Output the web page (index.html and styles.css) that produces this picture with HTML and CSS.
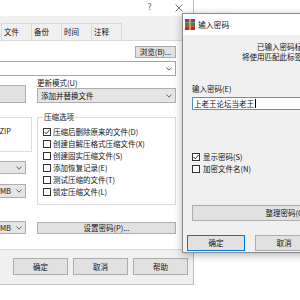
FILE: index.html
```html
<!DOCTYPE html>
<html>
<head lang="zh-CN">
    <meta charset="UTF-8">
    <title>输入密码</title>
    <link rel="stylesheet" href="styles.css">
</head>
<body>
    <!-- 后面的窗口：压缩文件名和参数 -->
    <div class="win" id="archive">
        <div class="caption">
            <span class="cap-btn cap-help">?</span>
            <span class="cap-btn">
                <svg width="8" height="8" viewBox="0 0 8 8"><path d="M0.5 0.5L7.5 7.5M7.5 0.5L0.5 7.5" stroke="#555" stroke-width="0.8" fill="none"/></svg>
            </span>
        </div>
        <div class="win-body">
            <ul class="tabs">
                <li>文件</li>
                <li>备份</li>
                <li>时间</li>
                <li>注释</li>
            </ul>
            <div class="page">
                <div class="row-browse">
                    <span class="btn btn-browse">浏览(B)...</span>
                </div>
                <div class="combo combo-edit">
                    <span></span>
                    <svg class="chev" width="6" height="4" viewBox="0 0 6 4"><polyline points="0.5,0.5 3,3.2 5.5,0.5" stroke="#555" stroke-width="0.9" fill="none"/></svg>
                </div>
                <div class="cols">
                    <div class="col-left">
                        <span class="btn btn-cfg"></span>
                        <div class="group group-fmt">
                            <div class="radios">
                                <span class="radio"><i></i>ZIP</span>
                            </div>
                        </div>
                        <div class="combo combo-method">
                            <span></span>
                            <svg class="chev" width="6" height="4" viewBox="0 0 6 4"><polyline points="0.5,0.5 3,3.2 5.5,0.5" stroke="#555" stroke-width="0.9" fill="none"/></svg>
                        </div>
                        <div class="combo combo-unit combo-dict">
                            <span>MB</span>
                            <svg class="chev" width="6" height="4" viewBox="0 0 6 4"><polyline points="0.5,0.5 3,3.2 5.5,0.5" stroke="#555" stroke-width="0.9" fill="none"/></svg>
                        </div>
                        <div class="combo combo-unit combo-vol">
                            <span>MB</span>
                            <svg class="chev" width="6" height="4" viewBox="0 0 6 4"><polyline points="0.5,0.5 3,3.2 5.5,0.5" stroke="#555" stroke-width="0.9" fill="none"/></svg>
                        </div>
                    </div>
                    <div class="col-right">
                        <div class="label">更新模式(U)</div>
                        <div class="combo combo-mode">
                            <span>添加并替换文件</span>
                            <svg class="chev" width="6" height="4" viewBox="0 0 6 4"><polyline points="0.5,0.5 3,3.2 5.5,0.5" stroke="#555" stroke-width="0.9" fill="none"/></svg>
                        </div>
                        <fieldset class="group group-opt">
                            <legend>压缩选项</legend>
                            <div class="check"><span class="box"><svg width="6" height="6" viewBox="0 0 6 6"><polyline points="0.6,3 2.3,4.8 5.4,1" stroke="#222" stroke-width="0.9" fill="none"/></svg></span>压缩后删除原来的文件(D)</div>
                            <div class="check"><span class="box"></span>创建自解压格式压缩文件(X)</div>
                            <div class="check"><span class="box"></span>创建固实压缩文件(S)</div>
                            <div class="check"><span class="box"></span>添加恢复记录(E)</div>
                            <div class="check"><span class="box"></span>测试压缩的文件(T)</div>
                            <div class="check"><span class="box"></span>锁定压缩文件(L)</div>
                        </fieldset>
                        <span class="btn btn-setpw">设置密码(P)...</span>
                    </div>
                </div>
            </div>
            <div class="win-foot">
                <span class="btn btn-foot">确定</span>
                <span class="btn btn-foot">取消</span>
                <span class="btn btn-foot">帮助</span>
            </div>
        </div>
    </div>

    <!-- 前面的窗口：输入密码 -->
    <div class="win" id="pwd">
        <div class="pwd-title">
            <svg width="10" height="11" viewBox="0 0 10 11">
                <rect x="0" y="0" width="10" height="3.6" fill="#7a3f95"/>
                <rect x="0" y="3.6" width="10" height="3.6" fill="#3f8a3c"/>
                <rect x="0" y="7.2" width="10" height="3.8" fill="#b5302a"/>
                <rect x="4" y="0" width="2" height="11" fill="#c9a35a"/>
            </svg>
            <span>输入密码</span>
        </div>
        <div class="pwd-body">
            <div class="note">
                <div class="note-1">已输入密码标签的列表</div>
                <div>将使用匹配此标签的密码</div>
            </div>
            <div class="pw-label">输入密码(E)</div>
            <div class="pw-input">上老王论坛当老王<span class="caret"></span></div>
            <div class="pw-checks">
                <div class="check"><span class="box"><svg width="6" height="6" viewBox="0 0 6 6"><polyline points="0.6,3 2.3,4.8 5.4,1" stroke="#222" stroke-width="0.9" fill="none"/></svg></span>显示密码(S)</div>
                <div class="check"><span class="box"></span>加密文件名(N)</div>
            </div>
            <span class="btn btn-organize">整理密码(O)...</span>
            <div class="pwd-foot">
                <span class="btn btn-dlg btn-default">确定</span>
                <span class="btn btn-dlg">取消</span>
            </div>
        </div>
    </div>
</body>
</html>
```

FILE: styles.css
```css
*{
    margin: 0;
    padding: 0;
    box-sizing: border-box;
}
ul{
    list-style: none;
}
body{
    width: 300px;
    height: 300px;
    overflow: hidden;
    position: relative;
    background: #ffffff;
    font-family: "Noto Sans CJK SC", "Noto Sans", sans-serif;
    font-size: 7.5px;
    line-height: 10px;
    color: #111;
}

/* 窗口 */
.win{
    position: absolute; /* 桌面上的窗口，互相叠在一起 */
    background: #f0f0f0;
    border: 1px solid #bcbcbc;
}
#archive{
    left: -20px;
    top: -1px;
    width: 214px;
    height: 286px;
}
.caption{
    height: 16px;
    background: #ffffff;
    display: flex;
    justify-content: flex-end;
}
.cap-btn{
    width: 29px;
    height: 16px;
    display: flex;
    align-items: center;
    justify-content: center;
}
.cap-help{
    font-family: "DejaVu Sans", sans-serif;
    font-size: 8px;
    color: #666;
}
.win-body{
    padding: 7px 5px 0;
}

/* 选项卡 */
.tabs{
    display: flex;
    padding-left: 15px;
    height: 17px;
}
.tabs li{
    width: 31px;
    height: 17px;
    margin-right: -1px;
    border: 1px solid #d9d9d9;
    border-bottom: none;
    background: #f0f0f0;
    padding-left: 2px;
    line-height: 15px;
}
.page{
    height: 210px;
    border: 1px solid #d9d9d9;
    background: #ffffff;
    padding: 5px 11px 0 6px;
}
.row-browse{
    display: flex;
    justify-content: flex-end;
}

/* 按钮 */
.btn{
    display: flex;
    align-items: center;
    justify-content: center;
    background: #e1e1e1;
    border: 1px solid #adadad;
    white-space: nowrap;
}
.btn-browse{
    width: 41px;
    height: 12px;
}

/* 下拉框 */
.combo{
    display: flex;
    align-items: center;
    justify-content: space-between;
    background: #e5e5e5;
    border: 1px solid #adadad;
    padding: 0 3px;
    white-space: nowrap;
}
.chev{
    flex: none;
}
.combo-edit{
    height: 15px;
    margin-top: 3px;
    background: #ffffff;
    border-color: #a5a5a5;
}

.cols{
    display: flex;
    gap: 5px;
    margin-top: 2px;
}
.col-left{
    width: 39px;
    flex: none;
}
.col-right{
    flex: 1;
}

.btn-cfg{
    margin: 7px 0 0 -60px;
    width: 93px;
    height: 18px;
}
.combo-method{
    margin: 9px 0 0 -60px;
    width: 93px;
    height: 13px;
}
.combo-unit{
    width: 30px;
    margin-left: 3px;
    padding-left: 3px;
}
.combo-dict{
    margin-top: 10px;
    height: 14px;
}
.combo-vol{
    margin-top: 23px;
    height: 13px;
}

/* 分组框 */
.group{
    border: 1px solid #dcdcdc;
    min-width: 0;
    padding: 4px 0 6px 5px;
    margin-top: 9px;
}
.group legend{
    line-height: 10px;
    padding: 0 1px;
}
.group-fmt{
    margin-left: -80px;
    width: 119px;
    height: 35px;
    margin-top: 14px;
    padding: 8px 20px 0 5px;
}
.radios{
    display: flex;
    justify-content: flex-end;
}
.radio{
    display: flex;
    align-items: center;
    gap: 3px;
}
.radio i{
    width: 8px;
    height: 8px;
    border: 1px solid #333;
    border-radius: 50%;
    background: #fff;
}

.label{
    height: 10px;
}
.combo-mode{
    height: 15px;
}

/* 复选框 */
.check{
    display: flex;
    align-items: center;
    gap: 2px;
    height: 12px;
    white-space: nowrap;
}
.box{
    width: 8px;
    height: 8px;
    flex: none;
    border: 1px solid #333;
    background: #fff;
    display: flex;
    align-items: center;
    justify-content: center;
}
.btn-setpw{
    margin-top: 17px;
    height: 12px;
}

.win-foot{
    display: flex;
    justify-content: flex-end;
    gap: 5px;
    padding-top: 8px;
}
.btn-foot{
    width: 55px;
    height: 17px;
}

/* 输入密码对话框 */
#pwd{
    left: 182px;
    top: 13px;
    width: 214px;
    height: 240px;
    border-color: #8c8c8c;
    box-shadow: 0 2px 8px rgba(0, 0, 0, 0.3);
    overflow: hidden;
}
.pwd-title{
    height: 21px;
    background: #ffffff;
    display: flex;
    align-items: center;
    gap: 3px;
    padding-left: 2px;
    font-size: 7.8px;
}
.pwd-body{
    padding: 0 9px;
}
.note{
    margin-top: 7px;
    padding-left: 50px;
    white-space: nowrap;
}
.note-1{
    padding-left: 15px;
}
.pw-label{
    margin-top: 22px;
}
.pw-input{
    margin-top: 3px;
    height: 13px;
    display: flex;
    align-items: center;
    padding-left: 1px;
    background: #ffffff;
    border: 1px solid #5b8fc7;
    white-space: nowrap;
}
.caret{
    width: 1px;
    height: 9px;
    background: #000;
    margin-left: 1px;
}
.pw-checks{
    margin-top: 41px;
}
.pw-checks .check{
    gap: 3px;
}
.btn-organize{
    margin-top: 30px;
    height: 16px;
}
.pwd-foot{
    display: flex;
    gap: 10px;
    margin: 14px 0 0 -5px;
}
.btn-dlg{
    width: 58px;
    height: 16px;
}
.btn-default{
    border-color: #0078d7;
}
```
